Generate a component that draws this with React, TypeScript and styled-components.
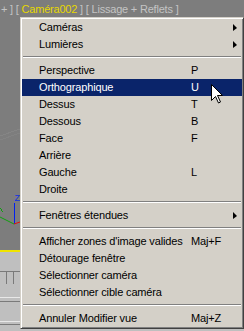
import React from 'react';
import styled, { createGlobalStyle } from 'styled-components';

const GlobalStyle = createGlobalStyle`
  html, body {
    margin: 0;
    padding: 0;
    background: #7d7d7d;
    overflow: hidden;
  }
  * {
    box-sizing: border-box;
  }
`;

const Screen = styled.div`
  position: relative;
  width: 244px;
  height: 331px;
  display: flex;
  flex-direction: column;
  font-family: 'Liberation Sans', Arial, sans-serif;
  font-size: 11px;
`;

const Viewport = styled.div`
  position: relative;
  height: 250px;
  background: #7d7d7d;
`;

const LabelBar = styled.div`
  display: flex;
  white-space: pre;
  padding-top: 2px;
  margin-left: 1px;
  line-height: 14px;
  letter-spacing: -0.2px;
`;

const LabelPart = styled.span<{ $active?: boolean }>`
  color: ${({ $active }) => ($active ? '#e6d800' : '#c4c4c4')};
`;

const Gizmo = styled.svg`
  position: absolute;
  left: 0;
  top: 120px;
`;

const ActiveBorder = styled.div`
  height: 2px;
  background: #f0e400;
`;

const Panel = styled.div`
  flex: 1;
  background: #bfbfbf;
  display: flex;
  flex-direction: column;
`;

const PanelRow = styled.div<{ $h: number; $top?: string; $bottom?: string }>`
  height: ${({ $h }) => $h}px;
  border-top: ${({ $top }) => ($top ? `1px solid ${$top}` : 'none')};
  border-bottom: ${({ $bottom }) => ($bottom ? `1px solid ${$bottom}` : 'none')};
  display: flex;
  gap: 6px;
  padding-left: 6px;
`;

const Tick = styled.div`
  width: 1px;
  height: 12px;
  background: #7a7a7a;
`;

const Menu = styled.div`
  position: absolute;
  left: 20px;
  top: 17px;
  width: 224px;
  padding: 1px;
  background: #d4d0c8;
  border-top: 1px solid #d4d0c8;
  border-left: 1px solid #d4d0c8;
  border-right: 1px solid #404040;
  border-bottom: 1px solid #404040;
  box-shadow: inset 1px 1px #ffffff, inset -1px -1px #808080;
  color: #000;
  letter-spacing: -0.15px;
`;

const Row = styled.div<{ $active?: boolean }>`
  display: flex;
  align-items: center;
  height: 17px;
  line-height: 17px;
  padding-left: 17px;
  background: ${({ $active }) => ($active ? '#0a246a' : 'transparent')};
  color: ${({ $active }) => ($active ? '#ffffff' : '#000000')};
  white-space: nowrap;
`;

const Label = styled.span`
  width: 152px;
  flex-shrink: 0;
`;

const Shortcut = styled.span`
  flex: 1;
`;

const Arrow = styled.span`
  width: 0;
  height: 0;
  margin-right: 5px;
  border-top: 4px solid transparent;
  border-bottom: 3px solid transparent;
  border-left: 4px solid #000;
`;

const Separator = styled.div`
  height: 9px;
  padding: 3px 1px 0;
  &::before {
    content: '';
    display: block;
    border-top: 1px solid #808080;
    border-bottom: 1px solid #ffffff;
  }
`;

const Cursor = styled.svg`
  position: absolute;
  left: 211px;
  top: 84px;
`;

type Entry =
  | { label: string; key?: string; sub?: boolean; active?: boolean }
  | 'sep';

const entries: Entry[] = [
  { label: 'Caméras', sub: true },
  { label: 'Lumières', sub: true },
  'sep',
  { label: 'Perspective', key: 'P' },
  { label: 'Orthographique', key: 'U', active: true },
  { label: 'Dessus', key: 'T' },
  { label: 'Dessous', key: 'B' },
  { label: 'Face', key: 'F' },
  { label: 'Arrière' },
  { label: 'Gauche', key: 'L' },
  { label: 'Droite' },
  'sep',
  { label: 'Fenêtres étendues', sub: true },
  'sep',
  { label: "Afficher zones d'image valides", key: 'Maj+F' },
  { label: 'Détourage fenêtre' },
  { label: 'Sélectionner caméra' },
  { label: 'Sélectionner cible caméra' },
  'sep',
  { label: 'Annuler Modifier vue', key: 'Maj+Z' },
];

export default function App() {
  return (
    <Screen>
      <GlobalStyle />
      <Viewport>
        <LabelBar>
          <LabelPart>+ ] [ </LabelPart>
          <LabelPart $active>Caméra002</LabelPart>
          <LabelPart> ] [ Lissage + Reflets ]</LabelPart>
        </LabelBar>
        <Gizmo width="24" height="110" viewBox="0 0 24 110" shapeRendering="crispEdges">
          <line x1="0" y1="16" x2="20" y2="9" stroke="#858585" />
          <line x1="0" y1="20" x2="20" y2="13" stroke="#838383" />
          <text x="14.5" y="81" fontSize="9" fill="#1030e0" fontFamily="Liberation Sans, sans-serif">
            Z
          </text>
          <line x1="14.5" y1="83" x2="14.5" y2="104" stroke="#0020f0" />
          <line x1="0" y1="97" x2="14" y2="104" stroke="#10a010" shapeRendering="auto" />
          <line x1="0.5" y1="88" x2="2.5" y2="92" stroke="#10a010" />
          <line x1="14" y1="104" x2="20" y2="102" stroke="#e01010" shapeRendering="auto" />
        </Gizmo>
      </Viewport>
      <ActiveBorder />
      <Panel>
        <PanelRow $h={20} $bottom="#7a7a7a" />
        <PanelRow $h={25}>
          <Tick />
          <Tick />
        </PanelRow>
        <PanelRow $h={5} $top="#e8e8e8" $bottom="#7a7a7a" />
        <PanelRow $h={19} />
        <PanelRow $h={4} $top="#e8e8e8" $bottom="#7a7a7a" />
      </Panel>
      <Menu>
        {entries.map((e, i) =>
          e === 'sep' ? (
            <Separator key={`sep${i}`} />
          ) : (
            <Row key={e.label} $active={e.active}>
              <Label>{e.label}</Label>
              <Shortcut>{e.key}</Shortcut>
              {e.sub && <Arrow />}
            </Row>
          ),
        )}
      </Menu>
      <Cursor width="13" height="20" viewBox="0 0 13 20" shapeRendering="crispEdges">
        <path
          d="M0.5 0.5 V16.5 L4.5 12.5 L7.5 19 L9.5 18 L6.5 11.5 H11.5 Z"
          fill="#ffffff"
          stroke="#000000"
          strokeWidth="1"
          strokeLinejoin="miter"
          shapeRendering="auto"
        />
      </Cursor>
    </Screen>
  );
}
